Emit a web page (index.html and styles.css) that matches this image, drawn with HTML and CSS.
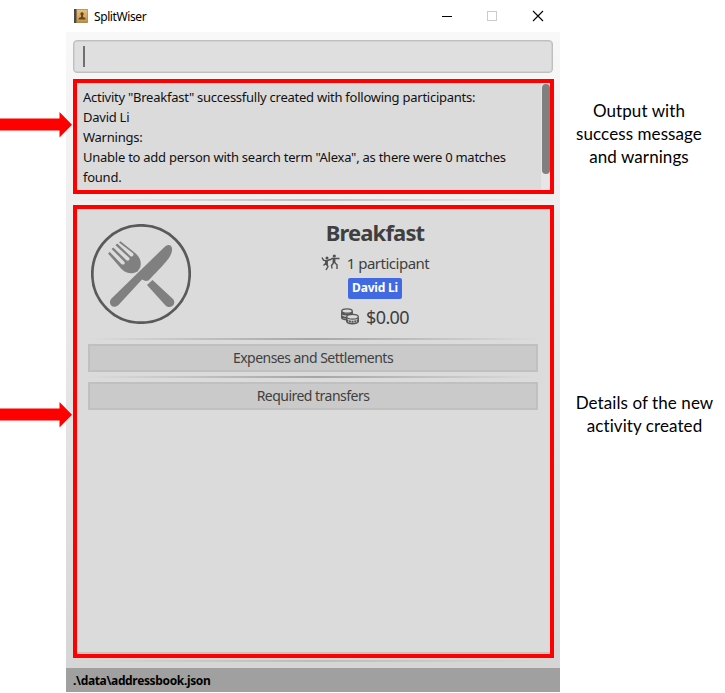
FILE: index.html
```html
<!DOCTYPE html>
<html lang="en">
<head>
<meta charset="utf-8">
<title>SplitWiser</title>
<link rel="stylesheet" href="styles.css">
</head>
<body>
<div class="page">
  <aside class="pointers">
    <svg class="arrow" width="73" height="26" viewBox="0 0 73 26"><path d="M0 6.500H59.500V0L72 12.800 59.500 25.600V18.500H0z"/></svg>
    <svg class="arrow" width="73" height="26" viewBox="0 0 73 26"><path d="M0 6.500H59.500V0L72 12.800 59.500 25.600V18.500H0z"/></svg>
  </aside>
  <main class="window">
    <header class="titlebar">
      <svg class="app-icon" width="14" height="14" viewBox="0 0 14 14">
        <defs><linearGradient id="book" x2="0" y2="1"><stop stop-color="#e6bf7e"/><stop offset="1" stop-color="#c99645"/></linearGradient></defs>
        <rect width="14" height="14" rx=".7" fill="#a98a5c"/>
        <rect x="3" y=".7" width="10.400" height="12" fill="url(#book)"/>
        <rect width="2.300" height="14" fill="#4d4743"/>
        <path d="M8 3.200a1.700 1.700 0 0 1 1 3.100v1.800l2.400 1v1.400H4.700V9.100l2.400-1V6.300A1.700 1.700 0 0 1 8 3.200z" fill="#63461f"/>
      </svg>
      <span class="app-name">SplitWiser</span>
      <svg class="controls" width="104" height="12" viewBox="0 0 104 12" fill="none">
        <path d="M0 6.500H10" stroke="#000"/>
        <rect x="45.500" y="1.500" width="9" height="9" stroke="#ccc"/>
        <path d="M91 1l10 10M101 1L91 11" stroke="#000" stroke-width="1.100"/>
      </svg>
    </header>
    <section class="content">
      <div class="command"><i class="caret"></i></div>
      <div class="result">
        <div class="message">Activity "Breakfast" successfully created with following participants:<br>David Li<br>Warnings:<br>Unable to add person with search term "Alexa", as there were 0 matches<br>found.</div>
        <div class="scroll"><i class="thumb"></i></div>
      </div>
      <div class="divider"></div>
      <div class="activity">
        <div class="summary">
          <svg class="meal" width="100" height="100" viewBox="0 0 100 100">
            <circle cx="50" cy="50" r="48.700" fill="none" stroke="#5a5a5a" stroke-width="2.700"/>
            <g fill="#808080">
              <path d="M29.500 17.300L43.500 28.500C50 33.500 50.500 39 49.200 43.500L46.500 47.500C42 50 36 50.500 30.500 45L17 29.500 18.800 28 30.600 40.200C33 41.500 34.500 39.500 33.300 37.700L20.600 25 22.300 23.500 35.400 36.300C37.500 37.500 39.500 35.500 38 33.600L24.500 21.300 26.200 19.600 39.500 32.200C41.500 33.500 43.500 31 42 29.200L28 18.500z"/>
              <path d="M61.500 56L56 61 74.500 81.500C80 86 86 79.500 82 75z"/>
              <path d="M73.500 23C77 19 82 21 81 26.500 80 33 76 37.500 57.500 56.500L54.500 57 51 55.500 27.500 81C22 86 16 79.500 20.500 74.500z"/>
            </g>
          </svg>
          <div class="facts">
            <h1>Breakfast</h1>
            <div class="people">
              <svg width="19" height="17" viewBox="0 0 19 17" fill="none" stroke="#505050" stroke-width="1.400">
                <circle cx="6" cy="4" r="1.500" fill="#505050" stroke="none"/><circle cx="13.300" cy="2" r="1.600" fill="#505050" stroke="none"/>
                <path d="M1 3.500L2.500 6.200 5.500 7 9 5.500M5 9L2.500 11.500M5.500 10.500L7 12.500 5 16M9 6L11 4.500H18.500M12.500 9L10.500 11.500 11 14.500M13.500 8.500l2.500 2.200V15"/>
                <path d="M5.500 6.500v4.500M13 4.500v4.500" stroke-width="2.800"/>
              </svg>
              <span>1 participant</span>
            </div>
            <span class="tag">David Li</span>
            <div class="cost">
              <svg width="18" height="17" viewBox="0 0 18 17" fill="#dbdbdb" stroke="#555" stroke-width="1.300">
                <path d="M.7 3.500v6.500c1 2.300 9.500 2.500 10.600 0v-6.500"/>
                <path d="M.7 5.300c2 1.800 8.500 1.800 10.500 0M.7 8.500c2 1.800 8 1.800 10.500 0" fill="none" stroke-width="1.900"/>
                <ellipse cx="6" cy="3" rx="5.300" ry="2.200"/>
                <path d="M5.700 9.500v4c1 3 10.500 3 11.600 0v-4"/>
                <path d="M5.700 12c2 2.300 9.500 2.300 11.600 0" fill="none" stroke-width="2" stroke-dasharray="2 .6"/>
                <ellipse cx="11.500" cy="8.800" rx="5.800" ry="2.400"/>
              </svg>
              <span>$0.00</span>
            </div>
          </div>
        </div>
        <div class="rule"></div>
        <div class="bar">Expenses and Settlements</div>
        <div class="rule"></div>
        <div class="bar">Required transfers</div>
      </div>
      <div class="divider last"></div>
    </section>
    <footer class="status">.\data\addressbook.json</footer>
  </main>
  <aside class="notes">
    <p>Output with<br>success message<br>and warnings</p>
    <p class="details">Details of the new<br>activity created</p>
  </aside>
</div>
</body>
</html>
```
FILE: styles.css
```css
* { box-sizing: border-box; }
body { margin: 0; background: #fff; font-family: "Noto Sans", "Open Sans", sans-serif; color: #111; }
svg { display: block; flex: none; }
.page { display: grid; grid-template-columns: 66px 494px 165px; height: 693px; overflow: hidden; }
.pointers { position: relative; z-index: 2; padding-top: 112px; display: flex; flex-direction: column; gap: 264px; }
.arrow { fill: #f00; }
.window { height: 692px; display: flex; flex-direction: column; }
.titlebar { height: 32px; display: flex; align-items: center; padding: 0 14px 0 8px; }
.app-name { margin-left: 6px; font-size: 12px; letter-spacing: -.4px; color: #000; }
.controls { margin-left: auto; }
.content { flex: 1; padding: 8px 6px 0 7px; display: flex; flex-direction: column; background: linear-gradient(#f8f8f8, #d6d6d6); }
.command { height: 33px; width: 480px; border: 1px solid #bfbfbf; border-radius: 4px; background: #dfdfdf; padding: 5px 9px; box-shadow: inset 0 0 0 .5px #c4c4c4; }
.caret { display: block; width: 2px; height: 21px; background: #707070; }
.result { margin-top: 6px; height: 115px; border: 4px solid #f00; background: #dbdbdb; display: flex; justify-content: space-between; }
.message { padding: 4px 0 0 6px; font-size: 13px; line-height: 20px; letter-spacing: -.25px; white-space: nowrap; }
.scroll { width: 9px; background: #e6e6e6; flex: none; }
.thumb { display: block; width: 8px; height: 90px; margin: 1px 0 0 1px; border-radius: 4px; background: #808080; }
.divider { height: 2px; margin: 5px 0 4px; background: linear-gradient(90deg, transparent, #bcbcbc 50%, transparent); flex: none; }
.divider.last { margin: 2px 0 0; }
.activity { height: 453px; border: 4px solid #f00; background: #dbdbdb; box-shadow: inset 0 -2px #c4c4c4; padding: 0 12px 0 11px; }
.summary { height: 129px; padding: 15px 0 0 3px; display: flex; }
.facts { flex: none; width: 368px; margin-top: -9px; display: flex; flex-direction: column; align-items: center; color: #3f3f3f; }
h1 { margin: 0; font-size: 22px; line-height: 34px; letter-spacing: -.85px; }
.people, .cost { display: flex; align-items: center; gap: 7px; }
.people { height: 27px; font-size: 15px; letter-spacing: -.5px; }
.tag { height: 21px; margin-top: 2px; padding: 0 4px; border-radius: 2px; background: #4169e1; color: #fff; font: bold 12px/20px "Noto Sans", sans-serif; letter-spacing: -.2px; }
.cost { margin-top: 4px; height: 27px; font-size: 18px; letter-spacing: -.6px; }
.rule { height: 2px; margin: 0 0 4px; background: linear-gradient(90deg, transparent, #a6a6a6 50%, transparent); }
.bar { height: 28px; border: 2px solid #c0c0c0; background: #cacaca; text-align: center; font-size: 14px; line-height: 23px; letter-spacing: -.52px; color: #3f3f3f; margin-bottom: 4px; }
.status { height: 24px; padding-left: 7px; background: #a0a0a0; color: #000; font-weight: bold; font-size: 12px; line-height: 25px; letter-spacing: -.35px; }
.notes { padding: 99px 0 0 7px; text-align: center; font: 17px/23px Lato, sans-serif; letter-spacing: .08px; color: #000; white-space: nowrap; }
.notes p { margin: 0 0 0 -14px; }
.notes .details { margin: 223px 0 0 -3px; }
```
